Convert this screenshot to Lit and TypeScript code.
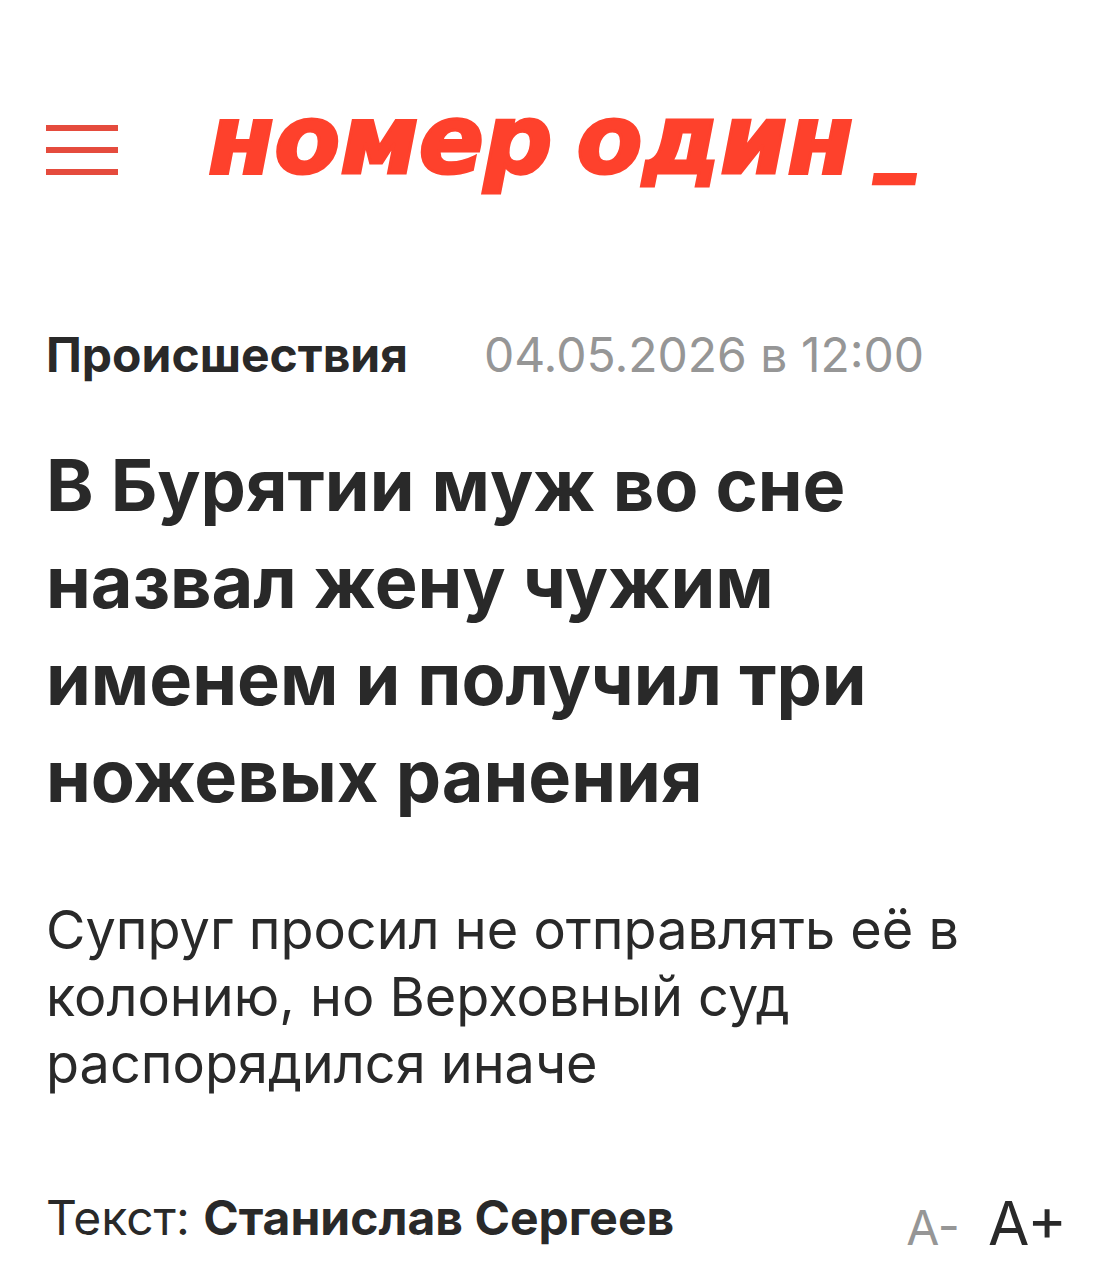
import { LitElement, html, css } from "lit";
import { customElement, state } from "lit/decorators.js";

@customElement("app-root")
export class AppRoot extends LitElement {
  @state() private step = 0;

  static styles = css`
    :host { display: block; min-height: 100vh; background: #fff; color: #292929; font-family: Inter, "Liberation Sans", sans-serif; }
    .page { padding: 100px 46px 8px; }
    .header { display: flex; align-items: center; gap: 90px; }
    button { border: 0; background: none; padding: 0; font-family: inherit; cursor: pointer; color: inherit; }
    .menu { display: flex; flex-direction: column; gap: 16px; width: 72px; }
    .bar { height: 6px; background: #e54b3d; }
    .logo { display: flex; align-items: baseline; gap: 24px; padding-bottom: 18px; color: #fe412c; text-decoration: none; line-height: 80px; font-style: italic; white-space: nowrap; }
    .word { font-family: "DejaVu Sans", sans-serif; font-weight: 700; font-size: 96px; -webkit-text-stroke: 3px #fe412c; }
    .cursor { font-size: 88px; font-weight: 900; }
    .meta { display: flex; gap: 76px; margin-top: 124px; font-size: 48px; line-height: 64px; }
    .rubric { color: inherit; text-decoration: none; font-weight: 700; }
    .date { color: #969696; }
    h1 { margin: 49px 0 0; max-width: 840px; font-size: 72px; line-height: 97px; font-weight: 700; }
    .lead { margin: 72px 0 0; font-size: 54px; line-height: 67px; }
    .foot { display: flex; justify-content: space-between; align-items: center; margin-top: 80px; font-size: 48px; line-height: 72px; }
    .sizes { display: flex; align-items: baseline; gap: 28px; padding-top: 10px; }
    .smaller { color: #969696; font-size: 48px; }
    .larger { font-size: 60px; }
  `;

  render() {
    return html`
      <main class="page">
        <header class="header">
          <button class="menu" aria-label="Меню"><span class="bar"></span><span class="bar"></span><span class="bar"></span></button>
          <a class="logo" href="#"><span class="word">номер</span><span class="word">один</span><span class="cursor">_</span></a>
        </header>
        <div class="meta"><a class="rubric" href="#">Происшествия</a><time class="date" datetime="2026-05-04T12:00">04.05.2026 в 12:00</time></div>
        <h1>В Бурятии муж во сне назвал жену чужим именем и получил три ножевых ранения</h1>
        <p class="lead">Супруг просил не отправлять её в колонию, но Верховный суд распорядился иначе</p>
        <footer class="foot">
          <span>Текст: <b>Станислав Сергеев</b></span>
          <div class="sizes"><button class="smaller" @click=${() => this.step--}>A-</button><button class="larger" @click=${() => this.step++}>A+</button></div>
        </footer>
      </main>`;
  }
}
